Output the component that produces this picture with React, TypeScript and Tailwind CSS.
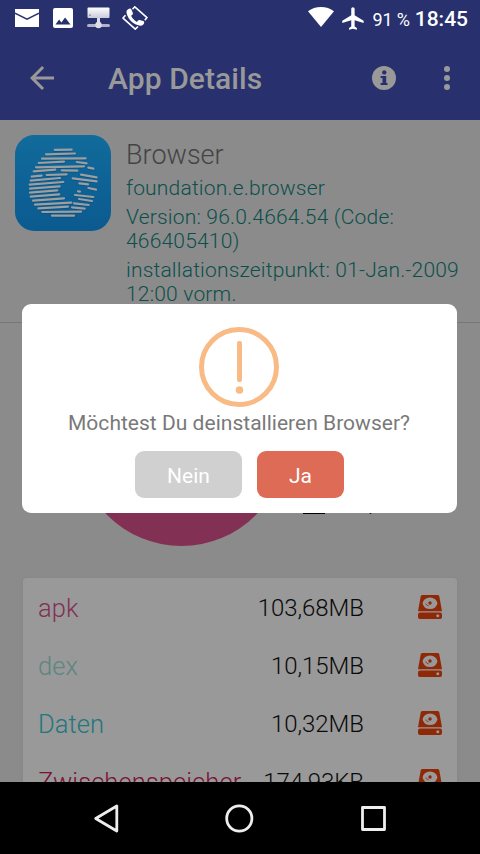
import type { ReactNode } from 'react';

const rows = [
  { label: 'apk', value: '103,68MB', color: 'text-[#833055]' },
  { label: 'dex', value: '10,15MB', color: 'text-[#5d8582]' },
  { label: 'Daten', value: '10,32MB', color: 'text-[#20777c]' },
  { label: 'Zwischenspeicher', value: '174,93KB', color: 'text-[#7a1234]' },
];

// x1, y1, x2, y2 of every stripe on the globe
const stripes = [
  [92, 17.5, 143, 17],
  [66, 31, 153, 28.5],
  [54, 44, 185, 43],
  [44, 57, 120, 53],
  [158, 54, 188, 58],
  [36, 70, 180, 67],
  [193, 71, 208, 74],
  [29, 82, 94, 77],
  [113, 79, 160, 80],
  [23, 98, 53, 95],
  [68, 93, 128, 91],
  [171, 92, 218, 100],
  [20, 110, 108, 102],
  [146, 103, 218, 112],
  [17, 122, 118, 114],
  [166, 118, 192, 121],
  [18, 134, 107, 127],
  [193, 132, 216, 137],
  [18, 146, 100, 139],
  [162, 142, 168, 143],
  [20, 158, 106, 151],
  [153, 153, 208, 159],
  [27, 170, 120, 163],
  [165, 165, 204, 171],
  [33, 182, 142, 176],
  [150, 178, 194, 183],
  [43, 193, 132, 188],
  [144, 190, 182, 194],
  [55, 204, 171, 203],
  [84, 215, 150, 215],
];

function StatusBar() {
  return (
    <div className="flex h-9 shrink-0 items-center pl-[15px] pr-3 text-white">
      <svg className="h-[18px] w-6" viewBox="0 0 24 18">
        <path d="M0 0h24v18H0z" fill="#fff" />
        <path d="M0 4.200l12 6 12-6" fill="none" stroke="#28316d" strokeWidth="1.300" />
      </svg>
      <svg className="ml-[14px] h-5 w-5" viewBox="0 0 20 20">
        <rect width="20" height="20" rx="2" fill="#fff" />
        <path d="M2.500 16.500l3.600-5 2.300 3 3.700-5 5.400 7z" fill="#28316d" />
      </svg>
      <svg className="ml-3.5 h-[22px] w-[23px]" viewBox="0 0 23 22">
        <defs>
          <linearGradient id="drive" x1="0" y1="0" x2="0" y2="1">
            <stop offset="0" stopColor="#fff" />
            <stop offset="1" stopColor="#c9cbda" />
          </linearGradient>
        </defs>
        <rect x=".5" y=".5" width="22" height="10.500" rx="1" fill="url(#drive)" />
        <rect x="2" y="7.500" width="2" height="1.300" fill="#8c90b2" />
        <path d="M10 11h3v5h-3z" fill="#dcddea" />
        <rect x="0" y="17" width="23" height="3" rx="1.500" fill="#b0b3cb" />
        <circle cx="11.500" cy="18" r="3.200" fill="#dcddea" />
      </svg>
      <svg className="ml-3 h-6 w-[26px]" viewBox="0 0 26 24">
        <g fill="none" stroke="#fff" strokeWidth="1.600" strokeLinejoin="round">
          <path d="M10.500 3.200l2.300-2.400L25 11.600l-2.200 2.600" />
          <path d="M3.500 9.200L1 12.100l12.300 11 2.700-2.600" />
        </g>
        <path d="M7.600 2.600c-2.300.6-3.600 2.300-3 4.700 1.500 6.400 6.800 11.400 13.400 12.400 2.300.3 4-1 4.200-3.200.1-.8-.3-1.300-1-1.500l-3.600-1c-.7-.2-1.200 0-1.600.6l-1 1.400c-2.600-1.400-4.600-3.500-5.900-6.200l1.300-1.100c.5-.5.7-1 .5-1.600L9.400 3.500c-.2-.8-.9-1.100-1.800-.9z" fill="#fff" />
      </svg>
      <div className="flex-1" />
      <svg className="-mt-0.5 h-5 w-[26px]" viewBox="0 0 26 20">
        <path d="M0 4.300C3.600 1.500 8.100 0 13 0s9.400 1.500 13 4.300L13 20z" fill="#fff" />
      </svg>
      <svg className="ml-[6px] h-[27px] w-[27px] shrink-0" viewBox="0 0 24 24">
        <path d="M21 16v-2l-8-5V3.500c0-.83-.67-1.500-1.500-1.500S10 2.670 10 3.500V9l-8 5v2l8-2.500V19l-2 1.500V22l3.500-1 3.500 1v-1.500L13 19v-5.500l8 2.500z" fill="#fff" />
      </svg>
      <span className="ml-[5px] mt-0.5 text-[18px] tracking-[-0.15px]">91 %</span>
      <span className="ml-[5px] mt-1 text-[21px] font-medium">18:45</span>
    </div>
  );
}

function AppBar() {
  return (
    <div className="flex h-21 shrink-0 items-center pl-6 pr-[30px] text-[#999]">
      <svg className="h-9 w-9" viewBox="0 0 24 24" fill="currentColor">
        <path d="M20 11H7.830l5.590-5.590L12 4l-8 8 8 8 1.410-1.410L7.830 13H20v-2z" />
      </svg>
      <h1 className="ml-12 flex-1 text-[30px] font-medium tracking-[0.08px]">App Details</h1>
      <svg className="h-6 w-6" viewBox="0 0 24 24">
        <circle cx="12" cy="12" r="12" fill="currentColor" />
        <circle cx="12.300" cy="6.400" r="2.200" fill="#28316d" />
        <path d="M8.600 10h5.600v7h1.300v2H8.600v-2h1.900v-5H8.600z" fill="#28316d" />
      </svg>
      <svg className="ml-12 h-6 w-1.5" viewBox="0 0 6 24" fill="currentColor">
        <circle cx="3" cy="3" r="3" />
        <circle cx="3" cy="12" r="3" />
        <circle cx="3" cy="21" r="3" />
      </svg>
    </div>
  );
}

function GlobeIcon() {
  return (
    <svg className="h-24 w-24 shrink-0" viewBox="-27 -27 288 288">
      <defs>
        <linearGradient id="globe" x1="0" y1="0" x2="0" y2="1">
          <stop offset="0" stopColor="#116b9b" />
          <stop offset="1" stopColor="#0b5a90" />
        </linearGradient>
      </defs>
      <rect x="-27" y="-27" width="288" height="288" rx="58" fill="url(#globe)" />
      <g stroke="#0c4f7c" strokeWidth="7" strokeLinecap="round" transform="translate(0 2)">
        {stripes.map(([x1, y1, x2, y2], i) => (
          <line key={i} x1={x1} y1={y1} x2={x2} y2={y2} />
        ))}
      </g>
      <g stroke="#999fa2" strokeWidth="6.500" strokeLinecap="round">
        {stripes.map(([x1, y1, x2, y2], i) => (
          <line key={i} x1={x1} y1={y1} x2={x2} y2={y2} />
        ))}
      </g>
    </svg>
  );
}

function DiskIcon() {
  return (
    <svg className="h-6 w-6" viewBox="0 0 24 24">
      <path d="M4.600 0h14.800c1 0 1.700.5 1.900 1.500L24 16.300H0L2.700 1.500C2.900.5 3.600 0 4.600 0z" fill="#8f2806" />
      <rect y="17.500" width="24" height="6.500" rx="2" fill="#8f2806" />
      <ellipse cx="12" cy="8.300" rx="7.300" ry="5.800" fill="#999" />
      <circle cx="12" cy="8" r="1.700" fill="#8f2806" />
      <path d="M8 8.600c.3 1.300 1.200 2 2.500 2.200" fill="none" stroke="#8f2806" strokeWidth="1" />
      <circle cx="19.800" cy="20.800" r="1.500" fill="#999" />
    </svg>
  );
}

function Button({ className, children }: { className: string; children: ReactNode }) {
  return (
    <button className={`h-[47px] rounded-[9px] pt-1 text-[21px] text-white ${className}`}>{children}</button>
  );
}

function ConfirmDialog() {
  return (
    <div className="absolute left-[22px] top-[304px] flex h-[209px] w-[435px] flex-col items-center rounded-[9px] bg-white pt-[23px]">
      <svg className="mr-px h-20 w-20" viewBox="0 0 80 80">
        <circle cx="40" cy="40" r="37.500" fill="none" stroke="#f8bb86" strokeWidth="5" />
        <rect x="38" y="14" width="5" height="41" rx="2" fill="#f8bb86" />
        <circle cx="40.500" cy="63" r="3.800" fill="#f8bb86" />
      </svg>
      <p className="mr-px mt-1 text-[21px] leading-6 tracking-[0.02px] text-[#797979]">Möchtest Du deinstallieren Browser?</p>
      <div className="mt-4 flex gap-[15px]">
        <Button className="w-[107px] bg-[#d0d0d0]">Nein</Button>
        <Button className="w-[87px] bg-[#dd6b55]">Ja</Button>
      </div>
    </div>
  );
}

export default function App() {
  return (
    <div className="relative flex h-[854px] w-[480px] flex-col overflow-hidden bg-[#8b8b8b] font-[Roboto,sans-serif]">
      <header className="bg-[#28316d]">
        <StatusBar />
        <AppBar />
      </header>

      <main className="min-h-0 flex-1 overflow-hidden font-light">
        <section className="flex h-[203px] border-b border-[#777] pl-[15px] pt-[15px]">
          <GlobeIcon />
          <div className="ml-[15px] mt-1 flex flex-col gap-[5px] text-[21px] leading-6 tracking-[0.19px] text-[#0b4f4c]">
            <h2 className="text-[27px] leading-8 tracking-normal text-[#444]">Browser</h2>
            <p>foundation.e.browser</p>
            <p>Version: 96.0.4664.54 (Code:<br />466405410)</p>
            <p className="whitespace-nowrap">installationszeitpunkt: 01-Jan.-2009<br />12:00 vorm.</p>
          </div>
        </section>

        <section className="flex h-[255px] pl-[77px] pt-[14px]">
          <div className="h-[209px] w-[209px] rounded-full bg-[#833055]" />
          <div className="ml-[17px] flex h-[178px] items-end gap-8">
            <div className="mb-px h-[22px] w-[22px] bg-black" />
            <span className="text-[21px] leading-6 text-black">apk</span>
          </div>
        </section>

        <section className="mx-[23px] rounded-t-[4px] bg-[#999] shadow-[0_1px_4px_rgba(0,0,0,0.05)]">
          {rows.map(row => (
            <div key={row.label} className="flex h-[58px] items-center pl-[15px] pr-[15px] pt-0.5">
              <span className={`text-[25.5px] tracking-[0.08px] ${row.color}`}>{row.label}</span>
              <span className="ml-auto text-[24px] tracking-[-0.05px] text-[#0a0a0a]">{row.value}</span>
              <div className="-mt-0.5 ml-[54px]">
                <DiskIcon />
              </div>
            </div>
          ))}
        </section>
      </main>

      <nav className="flex h-[72px] shrink-0 items-center bg-black pl-[93px]">
        <svg className="h-[30px] w-[27px]" viewBox="0 0 27 30">
          <path d="M2.700 15.500L23.800 3v25z" fill="none" stroke="#eee" strokeWidth="2.800" strokeLinejoin="round" />
        </svg>
        <svg className="ml-[104px] h-[30px] w-[30px]" viewBox="0 0 30 30">
          <circle cx="15.300" cy="15.500" r="12.600" fill="none" stroke="#eee" strokeWidth="2.800" />
        </svg>
        <svg className="ml-[107px] mt-px h-[25px] w-[25px]" viewBox="0 0 25 25">
          <rect x="1.500" y="1.500" width="22" height="22" fill="none" stroke="#eee" strokeWidth="2.800" strokeLinejoin="round" />
        </svg>
      </nav>

      <ConfirmDialog />
    </div>
  );
}
